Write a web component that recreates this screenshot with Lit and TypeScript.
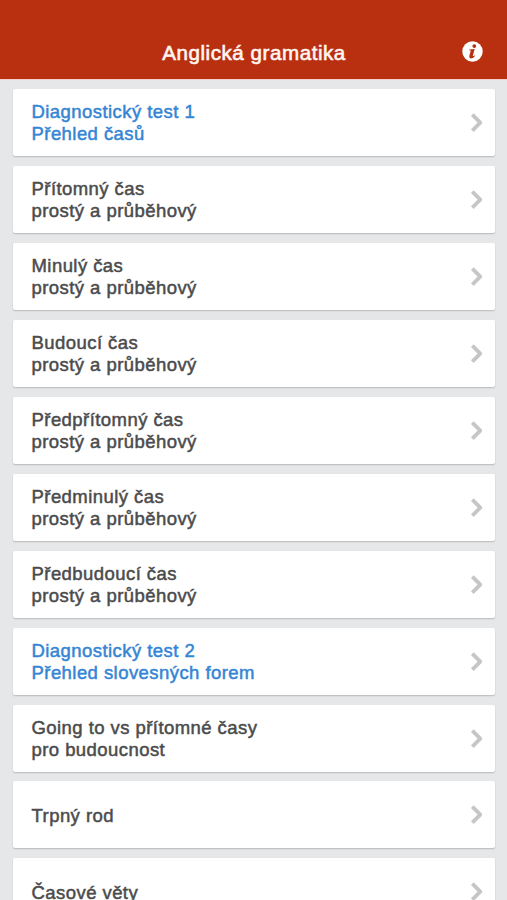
import { LitElement, html, css } from "lit";
import { customElement, property } from "lit/decorators.js";

interface Topic {
  lines: string[];
  test?: boolean;
}

const FORMS = "prostý a průběhový";

const TOPICS: Topic[] = [
  { lines: ["Diagnostický test 1", "Přehled časů"], test: true },
  { lines: ["Přítomný čas", FORMS] },
  { lines: ["Minulý čas", FORMS] },
  { lines: ["Budoucí čas", FORMS] },
  { lines: ["Předpřítomný čas", FORMS] },
  { lines: ["Předminulý čas", FORMS] },
  { lines: ["Předbudoucí čas", FORMS] },
  { lines: ["Diagnostický test 2", "Přehled slovesných forem"], test: true },
  { lines: ["Going to vs přítomné časy", "pro budoucnost"] },
  { lines: ["Trpný rod"] },
  { lines: ["Časové věty"] },
];

@customElement("topic-card")
class TopicCard extends LitElement {
  @property({ attribute: false }) topic!: Topic;

  static styles = css`
    :host {
      display: block;
    }
    .card {
      box-sizing: border-box;
      height: 67px;
      padding: 1px 11px 0 18.5px;
      display: flex;
      align-items: center;
      justify-content: space-between;
      background: #fff;
      border-radius: 2px;
      box-shadow: 0 1px 1.5px rgba(0, 0, 0, 0.2);
      color: #4b4b4b;
    }
    .test {
      color: #3585d4;
    }
    .line {
      font-size: 18.5px;
      line-height: 21.6px;
      letter-spacing: 0.44px;
      white-space: nowrap;
      -webkit-text-stroke: 0.5px currentColor;
    }
    .chevron {
      display: block;
      width: 14px;
      height: 20px;
      fill: none;
      stroke: #c6c6c6;
      stroke-width: 3.8;
      stroke-linejoin: round;
    }
  `;

  render() {
    return html`
      <div class="card ${this.topic.test ? "test" : ""}">
        <div>${this.topic.lines.map((l) => html`<div class="line">${l}</div>`)}</div>
        <svg class="chevron" viewBox="0 0 14 20">
          <path d="M2.3 1.7 L10.3 9.7 L2.3 17.7" />
        </svg>
      </div>
    `;
  }
}

@customElement("app-root")
class AppRoot extends LitElement {
  static styles = css`
    :host {
      display: block;
      height: 900px;
      overflow: hidden;
      background: #e6e7e9;
      font-family: "Liberation Sans", Arial, sans-serif;
    }
    .bar {
      box-sizing: border-box;
      height: 80px;
      padding: 25px 24px 0 24px;
      display: grid;
      grid-template-columns: 21px 1fr 21px;
      align-items: center;
      background: #b93011;
      border-bottom: 1px solid #f3d3c9;
      color: #fff5f0;
    }
    .title {
      grid-column: 2;
      padding-top: 2px;
      padding-left: 1px;
      text-align: center;
      font-size: 20.6px;
      line-height: 24px;
      letter-spacing: 0.54px;
      white-space: nowrap;
      -webkit-text-stroke: 0.6px currentColor;
    }
    .info {
      display: block;
      width: 21px;
      height: 21px;
      margin-top: -2px;
    }
    .list {
      padding: 9px 12px 0 13px;
      display: flex;
      flex-direction: column;
      gap: 9.95px;
    }
  `;

  render() {
    return html`
      <header class="bar">
        <div class="title">Anglická gramatika</div>
        <svg class="info" viewBox="0 0 21 21">
          <circle cx="10.5" cy="10.5" r="10.2" fill="#fff" />
          <circle cx="12.3" cy="5.1" r="1.9" fill="#b93011" />
          <path
            d="M7.3 8.5 L12.7 7.9 L10.8 14.7 Q10.6 15.7 12.5 14.2 L13 14.9 Q11 17.5 8.9 17.5 Q6.8 17.2 7.4 14.6 L8.8 9.6 L7.2 9.3 Z"
            fill="#b93011"
          />
        </svg>
      </header>
      <main class="list">
        ${TOPICS.map((t) => html`<topic-card .topic=${t}></topic-card>`)}
      </main>
    `;
  }
}
